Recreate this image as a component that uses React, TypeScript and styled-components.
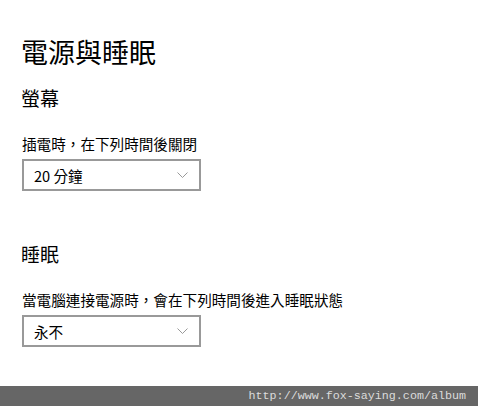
import React from 'react';
import styled, { createGlobalStyle } from 'styled-components';

const GlobalStyle = createGlobalStyle`
    html, body {
        margin: 0;
        padding: 0;
        background: #fff;
    }
    body {
        font-family: 'Noto Sans CJK TC', 'Noto Sans', sans-serif;
        color: #000;
    }
`;

const StyledPage = styled.div`
    display: flex;
    flex-direction: column;
    min-height: 100vh;
`;

const StyledContent = styled.main`
    display: flex;
    flex-direction: column;
    padding: 32px 0 0 21px;
`;

const StyledTitle = styled.h1`
    margin: 0;
    font-size: 27px;
    font-weight: 400;
    line-height: 40px;
`;

const StyledSection = styled.section<{ gap: number }>`
    display: flex;
    flex-direction: column;
    margin-top: ${(props) => props.gap}px;
`;

const StyledSectionTitle = styled.h2`
    margin: 0;
    font-size: 19px;
    font-weight: 400;
    line-height: 28px;
`;

const StyledLabel = styled.div`
    margin-top: 21px;
    font-size: 14.6px;
    line-height: 22px;
    padding-left: 1px;
`;

const StyledSelect = styled.div`
    display: flex;
    align-items: center;
    justify-content: space-between;
    box-sizing: border-box;
    width: 179px;
    height: 32px;
    margin-top: 4px;
    margin-left: 1px;
    padding: 0 11px 0 10px;
    border: 2px solid #999;
    font-size: 14.6px;
    cursor: pointer;
`;

const StyledChevron = styled.svg`
    width: 11px;
    height: 6px;
    display: block;
`;

const StyledFooter = styled.footer`
    margin-top: auto;
    height: 20px;
    background: #666;
    display: flex;
    align-items: center;
    justify-content: flex-end;
    padding-right: 12px;
    font-family: 'Liberation Mono', 'DejaVu Sans Mono', monospace;
    font-size: 11.7px;
    color: #dcdcdc;
`;

type SelectTypes = {
    value: string;
};
function Select({ value }: SelectTypes) {
    return (
        <StyledSelect>
            <span>{value}</span>
            <StyledChevron viewBox="0 0 11 6">
                <path d="M0.5 0.5 L5.5 5.5 L10.5 0.5" fill="none" stroke="#999" strokeWidth="1" />
            </StyledChevron>
        </StyledSelect>
    );
}

function App() {
    return (
        <StyledPage>
            <GlobalStyle />
            <StyledContent>
                <StyledTitle>電源與睡眠</StyledTitle>
                <StyledSection gap={12}>
                    <StyledSectionTitle>螢幕</StyledSectionTitle>
                    <StyledLabel>插電時，在下列時間後關閉</StyledLabel>
                    <Select value="20 分鐘" />
                </StyledSection>
                <StyledSection gap={49}>
                    <StyledSectionTitle>睡眠</StyledSectionTitle>
                    <StyledLabel>當電腦連接電源時，會在下列時間後進入睡眠狀態</StyledLabel>
                    <Select value="永不" />
                </StyledSection>
            </StyledContent>
            <StyledFooter>http://www.fox-saying.com/album</StyledFooter>
        </StyledPage>
    );
}

export default App;
